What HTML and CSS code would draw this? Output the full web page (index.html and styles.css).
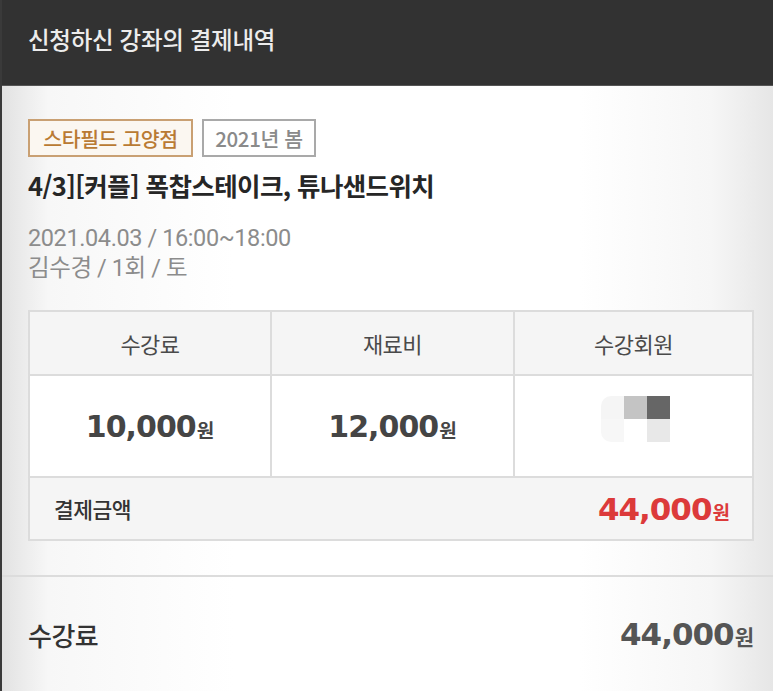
FILE: index.html
```html
<!DOCTYPE html>
<html lang="ko">
<head>
<meta charset="utf-8">
<title>신청하신 강좌의 결제내역</title>
<link rel="stylesheet" href="styles.css">
</head>
<body>
<div class="page">
  <header class="topbar">
    <h1 class="topbar-title">신청하신 강좌의 결제내역</h1>
  </header>
  <main class="content">
    <section class="course">
      <div class="tags">
        <span class="tag tag-store">스타필드 고양점</span>
        <span class="tag tag-term">2021년 봄</span>
      </div>
      <h2 class="course-title">4/3][커플] 폭찹스테이크, 튜나샌드위치</h2>
      <p class="course-meta">2021.04.03 / 16:00~18:00</p>
      <p class="course-meta">김수경 / 1회 / 토</p>
    </section>
    <div class="fee-table">
      <div class="row head">
        <div class="cell">수강료</div>
        <div class="cell">재료비</div>
        <div class="cell">수강회원</div>
      </div>
      <div class="row values">
        <div class="cell"><span class="num">10,000</span><span class="won">원</span></div>
        <div class="cell"><span class="num">12,000</span><span class="won">원</span></div>
        <div class="cell">
          <div class="blur">
            <span class="b b1"></span><span class="b b2"></span><span class="b b3"></span>
            <span class="b b4"></span><span class="b b5"></span><span class="b b6"></span>
          </div>
        </div>
      </div>
      <div class="row total">
        <div class="total-label">결제금액</div>
        <div class="total-amount"><span class="num">44,000</span><span class="won">원</span></div>
      </div>
    </div>
    <div class="summary">
      <div class="summary-label">수강료</div>
      <div class="summary-amount"><span class="num">44,000</span><span class="won">원</span></div>
    </div>
  </main>
</div>
</body>
</html>
```

FILE: styles.css
```css
html, body {
  margin: 0;
  padding: 0;
}
body {
  font-family: "Noto Sans CJK KR", "Noto Sans", sans-serif;
  width: 773px;
  height: 691px;
  overflow: hidden;
}
.page {
  width: 773px;
  height: 691px;
  box-sizing: border-box;
  border-left: 2px solid #3a3a3a;
  background: linear-gradient(90deg, #e2e2e2 0%, #f7f7f7 6%, #ffffff 30%, #ffffff 75%, #f6f6f6 92%, #e6e6e6 100%);
}
.topbar {
  height: 86px;
  background: #323232;
  display: flex;
  align-items: center;
  padding-left: 26px;
  border-bottom: 1px solid #555;
  box-sizing: border-box;
}
.topbar-title {
  margin: 0 0 8px 0;
  font-size: 23.5px;
  font-weight: 500;
  color: #ececec;
  letter-spacing: -0.3px;
}
.content {
  padding: 0 19px 0 26px;
}
.course {
  padding-top: 33px;
}
.tags {
  display: flex;
  gap: 9px;
}
.tag {
  display: inline-flex;
  align-items: center;
  justify-content: center;
  height: 38px;
  box-sizing: border-box;
  font-size: 20.5px;
  font-weight: 500;
  border: 2px solid;
  letter-spacing: -0.4px;
}
.tag-store {
  border-color: #c9a073;
  color: #b97a33;
  background: #fbf7f1;
  width: 165px;
}
.tag-term {
  border-color: #a9a9a9;
  color: #8a8a8a;
  background: #fff;
  width: 114px;
}
.course-title {
  margin: 11px 0 0 0;
  font-size: 25.5px;
  font-weight: 700;
  color: #262626;
  letter-spacing: -0.6px;
  line-height: 34px;
}
.course-meta {
  margin: 0;
  font-family: Roboto, "Noto Sans CJK KR", sans-serif;
  font-size: 23.5px;
  font-weight: 400;
  color: #8c8c8c;
  line-height: 30px;
  letter-spacing: -0.4px;
}
.course-title + .course-meta {
  margin-top: 21px;
}
.fee-table {
  margin-top: 27px;
  width: 726px;
  border: 2px solid #dcdcdc;
  box-sizing: border-box;
}
.row {
  display: grid;
  grid-template-columns: 240px 243px 1fr;
}
.row + .row {
  border-top: 2px solid #dcdcdc;
}
.cell + .cell {
  border-left: 2px solid #dcdcdc;
}
.head {
  height: 62px;
  background: #f5f5f5;
}
.head .cell {
  display: flex;
  align-items: center;
  justify-content: center;
  font-size: 22px;
  color: #4a4a4a;
  letter-spacing: -0.5px;
}
.values {
  height: 100px;
  background: #fff;
}
.values .cell {
  display: flex;
  align-items: center;
  justify-content: center;
  color: #454545;
}
.num {
  font-family: "DejaVu Sans", "Noto Sans", sans-serif;
  font-weight: 700;
  letter-spacing: -1px;
}
.values .num {
  font-size: 30px;
}
.won {
  font-weight: 700;
  font-size: 19px;
  margin-left: 1px;
}
.values .won {
  position: relative;
  top: 3px;
}
.blur {
  display: grid;
  grid-template-columns: 23px 23px 23px;
  grid-template-rows: 23px 23px;
  margin: 0 0 14px 4px;
}
.b1 { background: #f5f5f5; border-radius: 10px 0 0 0; }
.b2 { background: #c4c4c4; }
.b3 { background: #666; }
.b4 { background: #f7f7f7; border-radius: 0 0 0 10px; }
.b5 { background: #fff; }
.b6 { background: #e8e8e8; }
.total {
  display: flex;
  justify-content: space-between;
  align-items: center;
  height: 61px;
  background: #f5f5f5;
  padding: 0 22px 0 24px;
}
.total-label {
  font-size: 21.5px;
  color: #333;
  font-weight: 500;
  letter-spacing: -0.5px;
}
.total-amount {
  color: #dc3a3a;
}
.total-amount .num {
  font-size: 31px;
}
.total-amount .won {
  font-size: 19px;
}
.summary {
  margin: 34px -19px 0 -26px;
  border-top: 2px solid #dcdcdc;
  padding: 0 19px 0 26px;
  height: 114px;
  display: flex;
  align-items: center;
  justify-content: space-between;
}
.summary-label {
  font-size: 26px;
  font-weight: 500;
  color: #333;
  letter-spacing: -0.5px;
}
.summary-amount {
  color: #555;
}
.summary-amount .num {
  font-size: 31px;
}
.summary-amount .won {
  font-size: 21px;
}
```
